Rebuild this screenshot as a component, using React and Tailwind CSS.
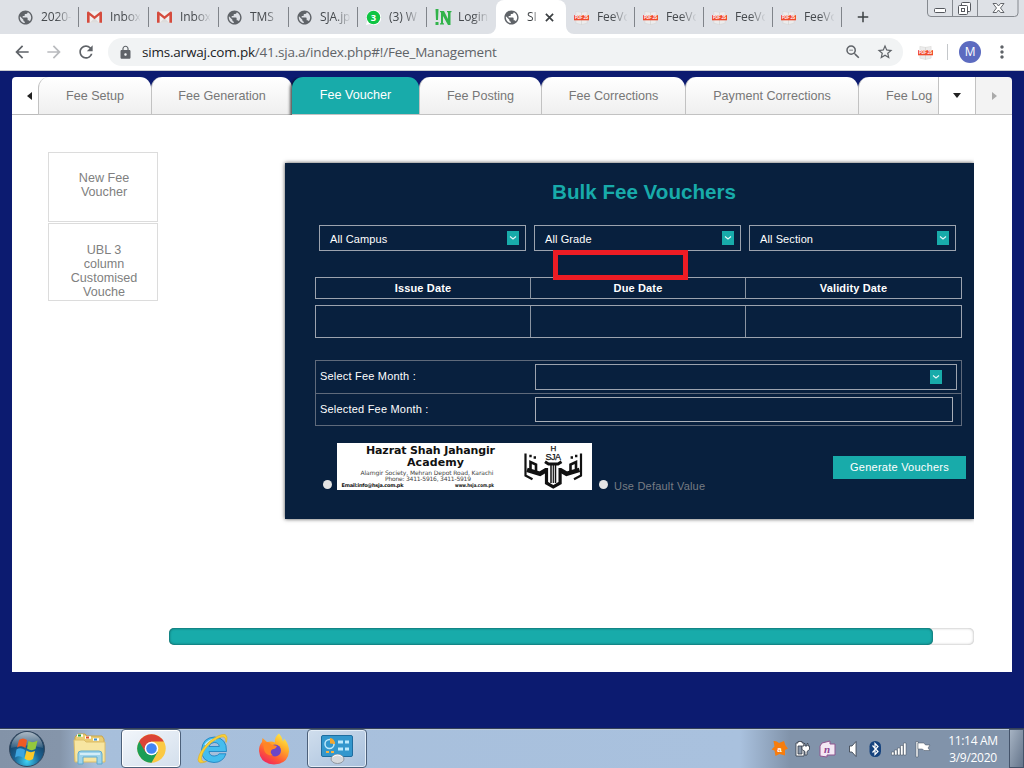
import React from "react";
import {
  MdPublic, MdArrowBack, MdArrowForward, MdRefresh, MdLock, MdZoomOut,
  MdStarBorder, MdMoreVert, MdAdd,
} from "react-icons/md";

function GmailIcon() {
  return (
    <svg viewBox="0 0 16 12" className="h-3 w-[15px]">
      <path d="M1 0h14v12H1z" fill="#f1efef" />
      <path d="M3 12 8 7l5 5z" fill="#dcdcdc" />
      <path d="M0 1.2C0 .4.8 0 1.6 0L8 5.2 14.4 0c.8 0 1.6.4 1.6 1.2V12h-2.8V4.2L8 8.4 2.8 4.2V12H0z" fill="#d54b3d" />
    </svg>
  );
}

function WhatsAppIcon() {
  return (
    <svg viewBox="0 0 16 16" className="size-[15px]">
      <path d="M0 16l1.2-4.2A8 8 0 1 1 4.2 15z" fill="#fff" />
      <circle cx="8" cy="8" r="7.2" fill="#0fc443" />
      <text x="8" y="11.6" fontSize="10" fontWeight="700" textAnchor="middle" fill="#fff" fontFamily="Open Sans, sans-serif">3</text>
    </svg>
  );
}

function NIcon() {
  return (
    <svg viewBox="0 0 17 17" className="h-[17px] w-[17px]" fill="#31b34a">
      <path d="M.5 0h3l-.5 11H1zM.5 13h3v3h-3z" />
      <path d="M5 2h4l4 8V3.500l-1-.5V2h4.500v1l-1 .5V16H13L8 7v7l1 .5v1H5v-1l1-.5V3.500L5 3z" />
    </svg>
  );
}

function PdfIcon() {
  return (
    <svg viewBox="0 0 16 16" className="size-[15px] shrink-0">
      <path d="M2 1.500l6 1v13l-6-1.500zM8 2.500l6-1V14l-6 1.500z" fill="#ececec" stroke="#d5d2d0" strokeWidth=".5" />
      <rect x="0" y="5.500" width="16" height="5.500" fill="#f04a2c" />
      <text x="8" y="10.100" fontSize="5" fontWeight="700" textLength="14" lengthAdjust="spacingAndGlyphs" textAnchor="middle" fill="#fff" fontFamily="Liberation Sans, sans-serif">PDF JS</text>
    </svg>
  );
}

const globe = <MdPublic className="size-[17px] -ml-px text-[#5f6368]" />;

const browserTabs = [
  { icon: globe, title: "2020-", w: "w-[69px]" },
  { icon: <GmailIcon />, title: "Inbox", w: "w-[70px]" },
  { icon: <GmailIcon />, title: "Inbox", w: "w-[70px]" },
  { icon: globe, title: "TMS", w: "w-[70px]" },
  { icon: globe, title: "SJA.jp", w: "w-[69px]" },
  { icon: <WhatsAppIcon />, title: "(3) W", w: "w-[69px]" },
  { icon: <NIcon />, title: "Login", w: "w-[69px]", noSep: true },
  { icon: globe, title: "SI", w: "w-[70px]", active: true },
  { icon: <PdfIcon />, title: "FeeVo", w: "w-[69px]" },
  { icon: <PdfIcon />, title: "FeeVo", w: "w-[69px]" },
  { icon: <PdfIcon />, title: "FeeVo", w: "w-[69px]" },
  { icon: <PdfIcon />, title: "FeeVo", w: "w-[69px]" },
];

function BrowserTab({ icon, title, w, active, noSep }) {
  if (active) {
    return (
      <div className={`${w} relative flex h-[34px] items-center rounded-t-lg bg-white pl-2 text-[#3c4043]`}>
        <svg className="absolute bottom-0 -left-2 size-2" viewBox="0 0 8 8"><path d="M8 0v8H0a8 8 0 0 0 8-8z" fill="#fff" /></svg>
        <svg className="absolute -right-2 bottom-0 size-2" viewBox="0 0 8 8"><path d="M0 0v8h8a8 8 0 0 1-8-8z" fill="#fff" /></svg>
        <span className="flex w-[23px] shrink-0">{icon}</span>
        <span className="w-[18px] overflow-hidden whitespace-nowrap [mask-image:linear-gradient(to_right,#000_5px,transparent_13px)]">{title}</span>
        <svg viewBox="0 0 10 10" className="size-[9px]"><path d="M1 1l8 8M9 1l-8 8" stroke="#3c4043" strokeWidth="1.900" /></svg>
      </div>
    );
  }
  return (
    <div className={`${w} flex h-[34px] shrink-0 items-center pl-2`}>
      <span className="flex w-[23px] shrink-0">{icon}</span>
      <span className="w-[30px] overflow-hidden whitespace-nowrap [mask-image:linear-gradient(to_right,#000_15px,transparent_31px)]">{title}</span>
      {!noSep && <span className="ml-auto h-5 w-px bg-[#80848a]" />}
    </div>
  );
}

function WindowControls() {
  return (
    <svg viewBox="0 0 94 18" className="mr-1 ml-auto h-[18px] w-[94px] self-start">
      <path d="M1.500-2V13a3.500 3.500 0 0 0 3.500 3.500h83.500a3.500 3.500 0 0 0 3.500-3.500V-2M26.500 0v16M51.500 0v16" fill="#dee1e6" stroke="#85898f" />
      <rect x="8.500" y="8.500" width="11" height="4" rx="1" fill="#fff" stroke="#55585e" />
      <g fill="#fff" stroke="#55585e">
        <rect x="35.500" y="2.500" width="9" height="9" rx="1" />
        <rect x="32.500" y="5.500" width="9" height="9" rx="1" />
        <rect x="35.500" y="8.500" width="3" height="3" />
      </g>
      <path d="M67 3.500h3.500l2 2.500 2-2.500H78L74.500 8l3.500 4.500h-3.500l-2-2.500-2 2.500H67L70.500 8z" fill="#fff" stroke="#55585e" strokeWidth=".9" />
    </svg>
  );
}

function Browser() {
  return (
    <header className="h-[71px] shrink-0 border-b border-[#c9cbcf] bg-white font-['Open_Sans','Noto_Sans',sans-serif] text-xs tracking-[-0.1px] text-[#45494d]">
      <div className="flex h-[34px] items-center bg-[#dee1e6] pl-[10px]">
        {browserTabs.map((t, i) => <BrowserTab key={i} {...t} />)}
        <MdAdd className="ml-3 size-[18px] shrink-0 text-[#3c4043]" />
        <WindowControls />
      </div>
      <div className="flex h-9 items-center text-[#5f6368]">
        <MdArrowBack className="ml-3 size-5" />
        <MdArrowForward className="ml-3 size-5 text-[#b9bbbe]" />
        <MdRefresh className="ml-3 size-5" />
        <div className="ml-3 flex h-7 w-[795px] items-center rounded-full bg-[#f1f3f4] pl-[10px]">
          <MdLock className="size-[15px]" />
          <span className="ml-[9px] text-[13.5px] tracking-[-0.2px] whitespace-nowrap">
            <span className="text-[#202124]">sims.arwaj.com.pk</span>/41.sja.a/index.php#!/Fee_Management
          </span>
          <MdZoomOut className="ml-auto size-[18px]" />
          <MdStarBorder className="mr-[9px] ml-[14px] size-[18px]" />
        </div>
        <span className="ml-[15px] flex"><PdfIcon /></span>
        <span className="ml-[14px] h-4 w-px bg-[#c4c7ca]" />
        <span className="ml-[11px] flex size-[22px] items-center justify-center rounded-full bg-[#5c6bc0] text-[12px] text-white">M</span>
        <MdMoreVert className="ml-[11px] size-5" />
      </div>
    </header>
  );
}

const pageTabs = [
  { label: "Fee Setup", w: "w-[113px]" },
  { label: "Fee Generation", w: "w-[141px]" },
  { label: "Fee Voucher", w: "w-[127px]", active: true },
  { label: "Fee Posting", w: "w-[122px]" },
  { label: "Fee Corrections", w: "w-[144px]" },
  { label: "Payment Corrections", w: "w-[173px]" },
];

function PageTabs() {
  return (
    <nav className="flex h-[38px] text-[12.6px] text-[#777]">
      <div className="flex w-[26px] items-center justify-end rounded-tl border-b border-[#bbb] bg-white pr-1.5">
        <span className="border-y-4 border-r-[5px] border-y-transparent border-r-[#222]" />
      </div>
      {pageTabs.map((t, i) => (
        <div key={t.label} className={i === 0 ? "bg-[linear-gradient(to_right,#fff_50%,transparent_50%)]" : ""}>
          {t.active ? (
            <div className={`${t.w} relative flex h-[38px] items-center justify-center rounded-t-[11px] border-b border-[#c2c2c2] bg-[#18abaa] pb-px text-white shadow-[-2px_1px_3px_rgba(0,0,0,0.65)] [clip-path:inset(0_0_0_-6px)]`}>{t.label}</div>
          ) : (
            <div className={`${t.w} flex h-[38px] items-center justify-center rounded-t-[11px] border-b border-l border-[#c2c2c2] bg-linear-to-b from-white to-[#efefef] pt-px`}>{t.label}</div>
          )}
        </div>
      ))}
      <div className="bg-[linear-gradient(to_left,#fff_50%,transparent_50%)]">
        <div className="flex h-[38px] w-20 items-center rounded-tl-[11px] border-b border-l border-[#c2c2c2] bg-linear-to-b from-white to-[#efefef] pt-px pl-[27px] whitespace-nowrap">Fee Log</div>
      </div>
      <div className="flex w-[37px] items-center justify-center border-b border-l border-[#c2c2c2] bg-white">
        <span className="border-x-[4.5px] border-t-[5px] border-x-transparent border-t-[#222]" />
      </div>
      <div className="flex w-[37px] items-center justify-center rounded-tr border-b border-l border-[#c2c2c2] bg-[#f3f3f3]">
        <span className="border-y-4 border-l-[5px] border-y-transparent border-l-[#aaa]" />
      </div>
    </nav>
  );
}

function DropArrow() {
  return (
    <svg viewBox="0 0 12 14" className="h-[14px] w-3 shrink-0">
      <path d="M0 0h12v14H0z" fill="#18abaa" />
      <path d="M3 5.500l3 2.500 3-2.500" fill="none" stroke="#e5f7f7" strokeWidth="1.100" />
    </svg>
  );
}

function Select({ label }) {
  return (
    <div className="flex h-[26px] w-[207px] items-center justify-between border border-[#9ca3ae] pr-1.5 pl-2.5">
      <span className="pt-0.5 tracking-[0.1px]">{label}</span>
      <DropArrow />
    </div>
  );
}

function SchoolBanner() {
  return (
    <svg viewBox="0 0 255 47" className="h-[47px] w-[255px] shrink-0" fontFamily="DejaVu Sans, sans-serif" fill="#111">
      <path d="M0 0h255v47H0z" fill="#fff" />
      <text x="29" y="10.500" fontSize="11" fontWeight="700" textLength="129">Hazrat Shah Jahangir</text>
      <text x="70" y="22.500" fontSize="11" fontWeight="700" textLength="57">Academy</text>
      <text x="23.500" y="31.800" fontSize="6" textLength="133" fill="#444">Alamgir Society, Mehran Depot Road, Karachi</text>
      <text x="48" y="38.200" fontSize="6" textLength="86" fill="#444">Phone: 3411-5916, 3411-5919</text>
      <text x="4.500" y="44" fontSize="5" fontWeight="700" textLength="62">Email:info@hsja.com.pk</text>
      <text x="118" y="44" fontSize="5" fontWeight="700" textLength="39" lengthAdjust="spacingAndGlyphs">www.hsja.com.pk</text>
      <g fontFamily="Liberation Sans, sans-serif" textAnchor="middle" stroke="#111" strokeWidth=".25">
        <text x="216.300" y="7.800" fontSize="8">H</text>
        <text x="216.300" y="16.500" fontSize="9" textLength="15.500">SJA</text>
      </g>
      <g fill="none" stroke="#111">
        <path d="M188.500 10.500v22l7 3.800M244 10.500v22l-7 3.800" strokeWidth="2.200" />
        <path d="M190 26.800l13 4 6-3.500M242.500 26.800l-13 4-6-3.500" strokeWidth="4.500" />
        <path d="M193.500 26v-7l5.500 2.500v7M239 26v-7l-5.500 2.500v7" strokeWidth="2.600" />
        <path d="M208 18.800l3.500 2.200h9.500l3.500-2.200" strokeWidth="3" />
        <path d="M209.500 25v15l6.800 4 6.800-4V25" strokeWidth="3.200" />
        <path d="M214 21v19M218.500 21v19" strokeWidth="1.500" />
        <path d="M216.300 22v18" strokeWidth="1.200" />
        <path d="M192.300 13h2.400M196.600 14.500h2.400M233.600 14.500h2.400M238 13h2.400" strokeWidth="2.300" />
      </g>
    </svg>
  );
}

function Panel() {
  return (
    <section className="relative flex h-[356px] w-[689px] flex-col bg-[#08203e] text-[11px] text-white shadow-[0_0_4px_rgba(0,0,0,0.7)] [clip-path:inset(-8px_0_-8px_-8px)]">
      <h1 className="pt-4 pl-[29px] text-center text-[20.6px] leading-[26px] font-bold text-[#18abaa]">Bulk Fee Vouchers</h1>
      <div className="mt-5 flex gap-2 pl-[34px]">
        <Select label="All Campus" />
        <Select label="All Grade" />
        <Select label="All Section" />
      </div>
      <div className="mt-[26px] ml-[30px] grid h-[22px] w-[647px] grid-cols-3 divide-x divide-[#8a94a1] border border-[#9ca3ae] text-center leading-[21px] font-bold tracking-[0.15px]">
        <span>Issue Date</span>
        <span>Due Date</span>
        <span>Validity Date</span>
      </div>
      <div className="mt-1.5 ml-[30px] grid h-[33px] w-[647px] grid-cols-3 divide-x divide-[#8a94a1] border border-[#9ca3ae]">
        <span /><span /><span />
      </div>
      <div className="mt-[22px] ml-[30px] h-[66px] w-[647px] divide-y divide-[#5f6a7b] border border-[#5f6a7b] tracking-[0.2px]">
        <div className="flex h-[33px] items-center pb-px pl-1">
          <span className="w-[215px]">Select Fee Month :</span>
          <div className="flex h-[26px] w-[422px] items-center justify-end border border-[#9ca3ae] pr-[14px]"><DropArrow /></div>
        </div>
        <div className="flex h-8 items-center pb-px pl-1">
          <span className="w-[215px]">Selected Fee Month :</span>
          <div className="h-[25px] w-[418px] border border-[#a9afb8]" />
        </div>
      </div>
      <div className="mt-[17px] flex items-start pl-[38px]">
        <span className="mt-[37px] size-[9px] rounded-full bg-[#e4e4e4]" />
        <span className="ml-[5px]"><SchoolBanner /></span>
        <span className="mt-[37px] ml-[7px] size-[9px] rounded-full bg-[#e4e4e4]" />
        <span className="mt-[35px] ml-1.5 w-[120px] tracking-[0.2px] text-[#777c83]">Use Default Value</span>
        <button className="mt-[13px] ml-[99px] h-[23px] w-[133px] bg-[#18abaa] pb-px tracking-[0.25px]">Generate Vouchers</button>
      </div>
      <div className="absolute top-[87px] left-[268px] h-[30px] w-[135px] border-5 border-[#ed1c24]" />
    </section>
  );
}

function SideButton({ lines, cls }) {
  return (
    <div className={`${cls} w-[110px] border border-[#dcdcdc] pl-0.5 text-center text-[12.6px] leading-[14px] text-[#808080]`}>
      {lines.map((l) => <div key={l}>{l}</div>)}
    </div>
  );
}

function StartOrb() {
  return (
    <svg viewBox="0 0 38 38" className="size-[38px]">
      <defs>
        <radialGradient id="orb" cx=".5" cy=".85" r=".8"><stop offset="0" stopColor="#3dd2f5" /><stop offset=".45" stopColor="#1c6393" /><stop offset="1" stopColor="#10304e" /></radialGradient>
        <linearGradient id="gloss" x2="0" y2="1"><stop stopColor="#d1dce5" stopOpacity=".8" /><stop offset="1" stopColor="#fff" stopOpacity=".1" /></linearGradient>
      </defs>
      <circle cx="19" cy="19" r="17.500" fill="url(#orb)" stroke="#34485f" />
      <path d="M3 18a16 16 0 0 1 32 0q-16-5-32 0z" fill="url(#gloss)" />
      <path d="M11 10q4-3 8 0l-1.500 8q-4-3-8.500-.5z" fill="#ef5a24" />
      <path d="M20.500 11q4 2.500 9-.5l-2 8.500q-4 2.500-8.500-.5z" fill="#94c83d" />
      <path d="M8.500 19.500q4-2.500 8.500.5l-1.500 8q-4-3-8.500-.5z" fill="#3da5e0" />
      <path d="M18.500 20.500q4 3 8.500.5l-2 8q-4 3-8.500-.5z" fill="#fdc928" />
    </svg>
  );
}

function FolderIcon() {
  return (
    <svg viewBox="0 0 34 32" className="h-8 w-[34px]">
      <path d="M2 4l3-3h7l2 2h15l2 3v22H2z" fill="#e9cc73" stroke="#c9a54a" />
      <path d="M4 2.500h6M12 4.500h6M20 6.500h6" stroke="#fff" strokeWidth="2.500" />
      <path d="M5 2.500h3" stroke="#22a33a" strokeWidth="2" /><path d="M13 4.500h3" stroke="#e2502a" strokeWidth="2" /><path d="M21 6.500h3" stroke="#3b8fd0" strokeWidth="2" />
      <path d="M1 7h10l2 2h19v20H2z" fill="#f7e5a1" stroke="#dcbd68" />
      <path d="M5 31V21q0-3 3-3h18q3 0 3 3v10h-5v-7H10v7z" fill="#9fd3ea" stroke="#5eaace" />
      <path d="M7 21h20" stroke="#e4f6fc" strokeWidth="1.500" />
    </svg>
  );
}

function ChromeIcon() {
  return (
    <svg viewBox="0 0 48 48" className="size-[31px]">
      <circle cx="24" cy="24" r="22" fill="#fbc943" />
      <path d="M24 24 4.900 13A22 22 0 0 0 24 46l9.500-16.500z" fill="#1b9e57" />
      <path d="M24 13h19A22 22 0 0 0 4.900 13L15 30z" fill="#db4437" />
      <circle cx="24" cy="24" r="10.500" fill="#fff" />
      <circle cx="24" cy="24" r="8.200" fill="#4385f4" />
    </svg>
  );
}

function IEIcon() {
  return (
    <svg viewBox="0 0 32 32" className="size-8">
      <path d="M29.500 18.500H12q.5 4.500 5.200 4.500 3.600 0 5-2.200h6.800Q26 29.500 17 29.500 4.500 29 4.500 17 5.500 4.500 17.500 4 30 5 29.500 18.500zM12 13.500h10.300q-.5-4-5.100-4-4.300 0-5.200 4z" fill="#45bdee" stroke="#2285c2" strokeWidth=".9" />
      <path d="M8 12Q12 6 19 6.500" fill="none" stroke="#b9e9fb" strokeWidth="1.500" />
      <path d="M29 9.500Q31.500 3.500 28 1.500 22.500.5 12.500 8.500 2 18 1 26.500q.5 5.500 8.500 2-5.500 1-5-4Q6 16.500 14.500 9.500 23.500 2.800 27 4q2 1 2 5.500z" fill="#fad034" stroke="#e0ac20" strokeWidth=".6" />
    </svg>
  );
}

function FirefoxIcon() {
  return (
    <svg viewBox="0 0 32 32" className="size-8">
      <defs><linearGradient id="ff" x1=".8" y1="0" x2=".2" y2="1"><stop stopColor="#fff04b" /><stop offset=".35" stopColor="#ffad28" /><stop offset=".7" stopColor="#ff5638" /><stop offset="1" stopColor="#ed1f63" /></linearGradient></defs>
      <path d="M21 .5q3 3 4 8 1-2 1-3 5 5 5 13Q30 31 16 31.500 2 30.500 1 18q0-6 3-9l.5-4L9 9l4-.5q2 0 4 1-1-5 4-9z" fill="url(#ff)" />
      <circle cx="17" cy="17.500" r="6" fill="#6b45c9" />
      <path d="M5 10q6-2 8 1.500l6 1.500q-1 3-5 3.500-3 3 1 6-8 0-9-6z" fill="#ff8526" />
    </svg>
  );
}

function ControlPanelIcon() {
  return (
    <svg viewBox="0 0 34 30" className="h-[30px] w-[34px]">
      <rect x="1.500" y="1.500" width="31" height="21" rx="1.500" fill="#3397cd" stroke="#1f6d9f" />
      <circle cx="9.500" cy="10" r="4.500" fill="none" stroke="#bee8fa" strokeWidth="1.500" />
      <path d="M10 9.500V4a5.500 5.500 0 0 1 5 6z" fill="#f6a72d" />
      <path d="M18 8h5M25 8h4M18 15h5M25 15h4" stroke="#bce9fc" strokeWidth="3" />
      <path d="M6 18h3M11 18h3" stroke="#f6b23e" strokeWidth="2" />
      <ellipse cx="17.500" cy="25" rx="6.500" ry="4.500" fill="#d5d8dc" stroke="#90979f" />
      <path d="M12.500 23q5-4 10 0" stroke="#fff" fill="none" />
    </svg>
  );
}

function Tray() {
  return (
    <svg viewBox="0 0 164 22" className="h-[22px] w-[164px]">
      <path d="M3.500 3q3-.5 5.500 2l5-2 1.500 4.500 2.500 3-3 1.500v5.500l-5.500-1.500-4 2-1-5.500-3-1 3-3z" fill="#f77d0d" />
      <text x="9.500" y="13.500" fontSize="8" fontWeight="700" textAnchor="middle" fill="#fff" fontFamily="Liberation Sans, sans-serif">a</text>
      <g stroke="#333b46" strokeWidth=".8" fill="#fff">
        <path d="M26 5h2V3.500h4V5h2v13h-8z" /><path d="M28 8h4v8h-4z" fill="#8795a8" />
        <path d="M32 8h2V5.500h1V8h2V5.500h1V8h1.500v3.500l-2.500 2V17h-2v-3.500l-3-2z" />
        <path d="M79.500 8h2.500l4-4.500v15L82 14h-2.500z" />
      </g>
      <path d="M52 5l8-2v3h5v11h-8v2l-7-1V8z" fill="#f4e8f4" stroke="#8f5791" />
      <text x="57" y="15" fontSize="11" fontWeight="700" fontStyle="italic" textAnchor="middle" fill="#8d4490" fontFamily="Liberation Serif, serif">n</text>
      <rect x="99.500" y="3" width="11.500" height="16" rx="5.500" fill="#16437e" />
      <path d="M102.500 7.500l5.500 6-3 3V5.500l3 3-5.500 6" stroke="#fff" fill="none" strokeWidth="1.200" />
      <g fill="#fff" stroke="#434d5b" strokeWidth=".5">
        <path d="M121.500 14h2.500v3h-2.500zM124.500 12h2.500v5h-2.500zM127.500 10h2.500v7h-2.500zM130.500 7.500h2.500V17h-2.500zM133.500 5h2.500v12h-2.500z" />
        <path d="M146 3.500h2V19h-2z" /><path d="M148 5h6l1.500 2h4.500l-2 3 2 2.500h-6L152.500 11H148z" />
      </g>
    </svg>
  );
}

function Taskbar() {
  return (
    <footer className="flex h-10 shrink-0 items-center border-t border-[#354158] bg-[linear-gradient(to_right,#8393a8_0,#8595aa_60px,#a7bfdb_95px,#a9c1de_740px,#8193aa_790px,#8193aa_100%)] shadow-[inset_0_1px_0_#bdcbdc]">
      <span className="ml-2"><StartOrb /></span>
      <span className="ml-[27px]"><FolderIcon /></span>
      <span className="ml-3.5 flex h-[39px] w-[60px] items-center justify-center rounded-sm border border-[#4c607a] bg-linear-to-br from-[#f2f6fb] to-[#d3dfec] shadow-[inset_0_0_0_1px_#fff]"><ChromeIcon /></span>
      <span className="ml-4"><IEIcon /></span>
      <span className="ml-[29px]"><FirefoxIcon /></span>
      <span className="ml-[17px] flex h-[39px] w-[60px] items-center justify-center rounded-sm border border-[#4c607a] bg-linear-to-br from-[#d0deed] to-[#a8c0dc] shadow-[inset_0_0_0_1px_#e3edf7]"><ControlPanelIcon /></span>
      <span className="ml-auto"><Tray /></span>
      <div className="mr-1.5 ml-[9px] w-[60px] text-center font-['Open_Sans','Noto_Sans',sans-serif] text-[12px] leading-[17px] tracking-[-0.3px] whitespace-nowrap text-white">
        <div>11:14 AM</div>
        <div>3/9/2020</div>
      </div>
      <span className="h-[39px] w-[15px] border border-[#44536a] bg-linear-to-br from-[#a6b3c3] to-[#65758b]" />
    </footer>
  );
}

export default function App() {
  return (
    <div className="flex h-[768px] w-[1024px] flex-col overflow-hidden bg-[#0c1b70] font-['Liberation_Sans',Arial,sans-serif]">
      <Browser />
      <main className="flex-1 px-3 pt-1.5">
        <PageTabs />
        <div className="h-[557px] bg-white">
          <div className="flex h-[513px] pl-9">
            <aside className="flex flex-col gap-px pt-[37px]">
              <SideButton cls="h-[70px] pt-[18px]" lines={["New Fee", "Voucher"]} />
              <SideButton cls="h-[78px] pt-[19px]" lines={["UBL 3", "column", "Customised", "Vouche"]} />
            </aside>
            <div className="mt-12 ml-[127px]"><Panel /></div>
          </div>
          <div className="ml-[157px] h-[17px] w-[805px] rounded-[5px] bg-white shadow-[inset_0_0_3px_rgba(0,0,0,0.35)]">
            <div className="h-[17px] w-[764px] rounded-[5px] bg-[#18abaa] shadow-[inset_0_0_3px_rgba(0,0,0,0.6)]" />
          </div>
        </div>
      </main>
      <Taskbar />
    </div>
  );
}
